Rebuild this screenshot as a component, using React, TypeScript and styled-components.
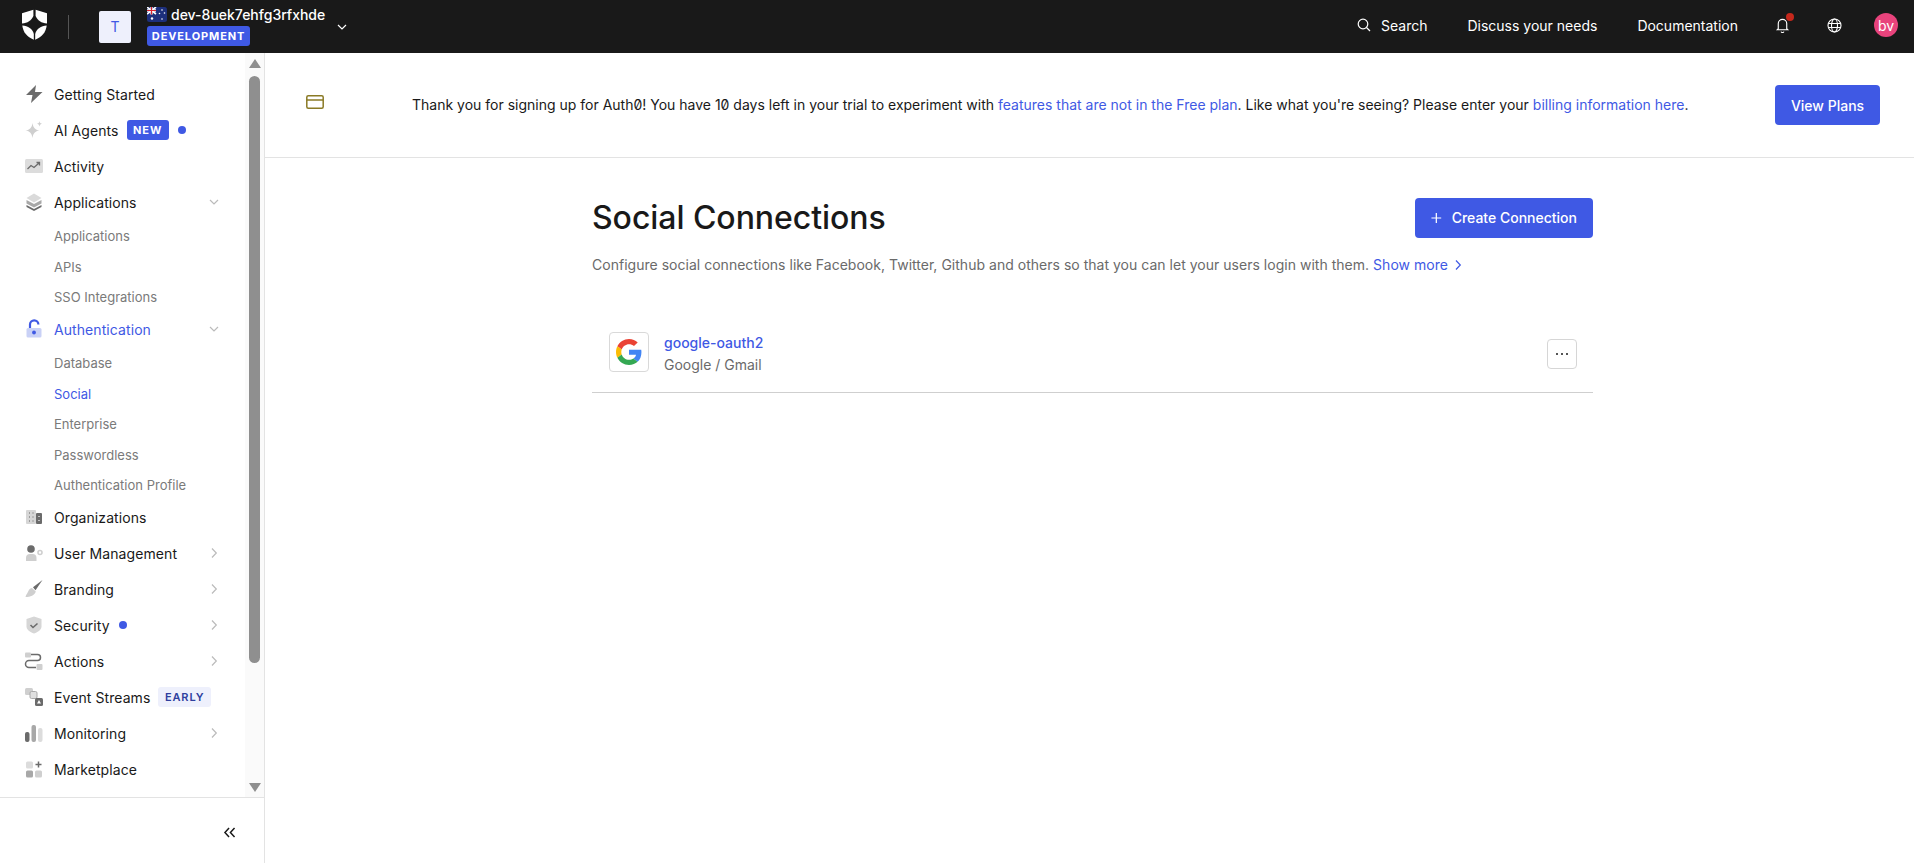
import React from "react";
import styled, { createGlobalStyle } from "styled-components";

const Global = createGlobalStyle`
  html, body { margin: 0; padding: 0; height: 100%; background: #fff; }
  body { font-family: Inter, "Noto Sans", sans-serif; color: #191919; overflow: hidden; }
  * { box-sizing: border-box; }
  a { text-decoration: none; }
`;

const Page = styled.div`display: flex; flex-direction: column; height: 863px; width: 1914px;`;
const Topbar = styled.header`height: 53px; flex: none; background: #191919; display: flex; align-items: center; padding: 0 16px 0 22px; color: #fff;`;
const LogoWrap = styled.div`width: 26px; height: 32px; flex: none; margin-top: -3px;`;
const Divider = styled.div`width: 1px; height: 24px; background: #555; margin: 0 30px 0 20px;`;
const TenantBox = styled.div`width: 32px; height: 32px; border-radius: 2px; background: #eef0fc; color: #3f59e4; display: flex; align-items: center; justify-content: center; font-size: 14px; margin-right: 16px;`;
const Tenant = styled.div`display: flex; flex-direction: column; gap: 3px; width: 189px; margin-top: -1px;`;
const TenantName = styled.div`display: flex; align-items: center; gap: 4px; font-size: 14px; font-weight: 500; line-height: 17px; white-space: nowrap;`;
const Badge = styled.span<{ $early?: boolean }>`
  display: inline-flex; align-items: center; justify-content: center; height: 20px; border-radius: 3px;
  padding: 0 6.5px; font-size: 11px; font-weight: 700; letter-spacing: 0.88px; line-height: 1;
  background: ${(p) => (p.$early ? "#eef0fc" : "#3f59e4")};
  color: ${(p) => (p.$early ? "#2f3f9e" : "#fff")};
  ${(p) => p.$early && "font-weight: 600;"}
`;
const EnvBadge = styled(Badge)`width: 103px;`;
const TopNav = styled.nav`margin-left: auto; margin-bottom: 3px; display: flex; align-items: center; font-size: 14px; font-weight: 400;`;
const TopLink = styled.a<{ $gap: number }>`color: #fff; margin-right: ${(p) => p.$gap}px; display: flex; align-items: center; gap: 10px; white-space: nowrap;`;
const IconBtn = styled.span<{ $gap: number }>`position: relative; display: flex; margin-right: ${(p) => p.$gap}px;`;
const RedDot = styled.span`position: absolute; top: -4px; right: -4px; width: 8px; height: 8px; background: #c5281c; border-radius: 50%;`;
const Avatar = styled.span`width: 24px; height: 24px; border-radius: 50%; background: #e8437c; color: #fff; display: flex; align-items: center; justify-content: center; font-size: 14px;`;

const Body = styled.div`flex: 1; display: flex; min-height: 0;`;
const Sidebar = styled.aside`width: 265px; flex: none; border-right: 1px solid #e3e3e3; display: flex; flex-direction: column;`;
const NavArea = styled.div`flex: 1; display: flex; min-height: 0; border-bottom: 1px solid #e3e3e3;`;
const NavList = styled.nav`flex: 1; padding: 24px 26px 0 24px; min-width: 0;`;
const Item = styled.div<{ $active?: boolean }>`
  height: 36px; padding-bottom: 2px; display: flex; align-items: center; font-size: 14px; font-weight: 400; letter-spacing: 0.08px;
  color: ${(p) => (p.$active ? "#3f59e4" : "#191919")};
`;
const IconSlot = styled.span`width: 30px; flex: none; display: flex; align-items: center;`;
const Sub = styled.div<{ $active?: boolean }>`
  height: 30.4px; display: flex; align-items: center; padding-left: 30px; font-size: 13px;
  color: ${(p) => (p.$active ? "#3f59e4" : "#7a7a7a")};
`;
const Dot = styled.span`width: 8px; height: 8px; background: #3f59e4; border-radius: 50%; margin-left: 9px;`;
const ItemBadge = styled(Badge)`margin-left: 8px;`;
const Chevron = styled.span`margin-left: auto; display: flex; margin-right: -1px;`;

const Scroll = styled.div`width: 19px; flex: none; background: #fafafa; display: flex; flex-direction: column; align-items: center; padding: 6px 0 5px 0;`;
const ArrowUp = styled.span`width: 0; height: 0; border-left: 6.5px solid transparent; border-right: 6.5px solid transparent; border-bottom: 9px solid #8f8f8f;`;
const ArrowDown = styled.span`width: 0; height: 0; border-left: 6.5px solid transparent; border-right: 6.5px solid transparent; border-top: 9px solid #8f8f8f; margin-top: auto;`;
const Thumb = styled.span`width: 11px; height: 587px; background: #8f8f8f; border-radius: 6px; margin-top: 8px;`;
const SideFoot = styled.div`height: 65px; flex: none; display: flex; align-items: center; justify-content: flex-end; padding: 3px 28px 0 0;`;

const Main = styled.main`flex: 1; min-width: 0; display: flex; flex-direction: column;`;
const Banner = styled.section`height: 105px; flex: none; border-bottom: 1px solid #e3e3e3; display: flex; align-items: center; padding: 0 34px 0 41px;`;
const CardIcon = styled.span`display: flex; margin-top: -6px;`;
const Message = styled.p`margin: 0 0 0 88px; font-size: 14px; line-height: 20px; font-feature-settings: "zero"; white-space: nowrap;`;
const LinkText = styled.a`color: #3f59e4;`;
const Primary = styled.button`
  height: 40px; border: 0; border-radius: 4px; background: #3f59e4; color: #fff; font: 500 14px Inter, sans-serif;
  display: flex; align-items: center; justify-content: center; gap: 10px; padding: 0 16px; white-space: nowrap;
`;
const PlansBtn = styled(Primary)`margin-left: auto; width: 105px;`;
const Content = styled.section`padding: 39px 321px 0 327px;`;
const HeadRow = styled.div`display: flex; align-items: center; justify-content: space-between; height: 41px;`;
const Title = styled.h1`margin: 0; font-size: 32px; font-weight: 500; line-height: 40px; letter-spacing: -0.05px;`;
const CreateBtn = styled(Primary)`width: 178px;`;
const Desc = styled.p`margin: 17px 0 0; font-size: 14px; line-height: 20px; letter-spacing: 0.02px; color: #6a6a6a; display: flex; align-items: center; gap: 4px;`;
const ShowMore = styled.a`color: #3f59e4; display: inline-flex; align-items: center; gap: 4px;`;
const ConnRow = styled.div`margin-top: 37px; height: 81px; border-bottom: 1px solid #cfcfcf; display: flex; align-items: center; padding: 0 16px 0 17px;`;
const LogoBox = styled.div`width: 40px; height: 40px; border: 1px solid #d9d9d9; border-radius: 4px; display: flex; align-items: center; justify-content: center; margin-right: 15px;`;
const ConnText = styled.div`display: flex; flex-direction: column; gap: 4px; margin-top: 4px;`;
const ConnName = styled.a`color: #3f59e4; font-size: 14px; font-weight: 500; line-height: 18px;`;
const ConnType = styled.span`color: #6a6a6a; font-size: 14px; line-height: 18px;`;
const MoreBtn = styled.button`margin-left: auto; margin-top: 4px; width: 30px; height: 30px; border: 1px solid #d6d6d6; border-radius: 4px; background: #fff; display: flex; align-items: center; justify-content: center; padding: 0;`;

const D = "#6b6b6b";
const L = "#cfcfcf";
const I = ({ children, w = 20, h = 20 }: { children: React.ReactNode; w?: number; h?: number }) => (
  <svg width={w} height={h} viewBox="0 0 20 20" fill="none">{children}</svg>
);
const Bolt = () => <I><path d="M12 1 2 11h6.5l-1.5 8L18.5 8H11z" fill={D} /></I>;
const Spark = () => <I><path d="M8.500 3c.8 5 2.500 6.700 7 7.500-4.500.8-6.200 2.500-7 7.500-.8-5-2.500-6.700-7-7.500 4.500-.8 6.200-2.500 7-7.500z" fill={L} /><path d="M15.500 1c.3 1.800 1 2.500 2.800 2.800-1.800.3-2.500 1-2.800 2.800-.3-1.800-1-2.500-2.800-2.800 1.800-.3 2.500-1 2.800-2.800z" fill={L} /></I>;
const Activity = () => <I><rect x="1" y="3" width="18" height="14" rx="1.500" fill="#dcdcdc" /><path d="M3.500 13l3.500-3.500 3 2 5-4.500M12.500 6.500h3v3" stroke={D} strokeWidth="1.300" /></I>;
const Layers = () => <I><path d="M10 1.500 17.500 6 10 10.500 2.500 6z" fill="#dadada" /><path d="M2.500 8 10 12l7.500-4v3.500L10 15.500 2.500 11.500z" fill="#a8a8a8" /><path d="M2.500 13 10 17l7.500-4v2L10 19l-7.500-4z" fill={D} /></I>;
const Lock = () => <I><rect x="2.500" y="9" width="15" height="9.500" rx="1.500" fill="#c9d1f6" /><path d="M6 9V5.500a4.200 4.200 0 0 1 8.400 0" stroke="#3f59e4" strokeWidth="2.200" /><circle cx="10" cy="13.500" r="1.900" fill="#3f59e4" /></I>;
const Orgs = () => <I><rect x="2" y="3" width="10" height="14" rx="1" fill="#d6d6d6" /><rect x="12" y="6" width="6" height="11" rx="1" fill={D} /><path d="M5 6h1M8.500 6h1M5 10h1M8.500 10h1M5 14h1M8.500 14h1" stroke="#8a8a8a" strokeWidth="1.500" /><path d="M15 9v1M15 13v1" stroke="#ddd" strokeWidth="1.500" /></I>;
const Users = () => <I><circle cx="7" cy="6" r="3.800" fill={D} /><path d="M2 18v-3a4 4 0 0 1 4-4h2.500a4 4 0 0 1 4 4v3z" fill={L} /><circle cx="16" cy="9.500" r="2" stroke={L} strokeWidth="1.600" /></I>;
const Brush = () => <I><path d="M18.500 1 9 8.200 11.500 11.200z" fill={D} /><path d="M8 9c-3.500.5-3.500 4-5.500 6.500-.5.500-1 2.500-1 2.500 5 0 9-1.500 10.300-5.500z" fill={L} /></I>;
const Shield = () => <I><path d="M10 1.500 17.500 4v7.500c0 3.500-3.500 5.500-7.500 7-4-1.500-7.500-3.500-7.500-7V4z" fill="#d6d6d6" /><path d="M6.500 10l2.500 2.500 4.500-4" stroke={D} strokeWidth="1.600" /></I>;
const Actions = () => <I><rect x="1" y="1.500" width="6" height="5" rx="1" fill={L} /><rect x="12.500" y="13" width="6" height="6" rx="1" fill={L} /><path d="M7 3.500h6.500a3 3 0 0 1 0 6h-8.500a3 3 0 0 0 0 7h7" stroke={D} strokeWidth="1.500" /></I>;
const Streams = () => <I><rect x="1" y="1" width="8" height="7" rx="1.500" fill={L} /><rect x="6" y="4.500" width="7" height="7" rx="1.500" fill="#e0e0e0" stroke="#aaa" /><rect x="11" y="11" width="8" height="8" rx="1.500" fill={D} /><path d="M15 13l2 3.500h-4z" fill="#fff" /></I>;
const Bars = () => <I><rect x="1" y="9" width="4.500" height="10" rx="2" fill={D} /><rect x="7.500" y="2" width="4.500" height="17" rx="2" fill="#a8a8a8" /><rect x="14" y="5" width="4.500" height="14" rx="2" fill="#dcdcdc" /></I>;
const Market = () => <I><rect x="2" y="2.500" width="7" height="7" rx="1.500" fill="#dcdcdc" /><rect x="2" y="11.500" width="7" height="7" rx="1.500" fill="#a8a8a8" /><rect x="11" y="11.500" width="7" height="7" rx="1.500" fill={L} /><path d="M14.500 2.500v6M11.500 5.500h6" stroke={D} strokeWidth="1.500" /></I>;

const ChevDown = ({ c = "#bbb", s = 12 }: { c?: string; s?: number }) => <svg width={s} height={s} viewBox="0 0 12 12" fill="none"><path d="M2 4l4 4 4-4" stroke={c} strokeWidth="1.200" /></svg>;
const ChevRight = ({ c = "#bbb" }: { c?: string }) => <svg width="12" height="12" viewBox="0 0 12 12" fill="none"><path d="M4 1.500l4.300 4.500L4 10.500" stroke={c} strokeWidth="1.200" /></svg>;

const Logo = () => (
  <svg width="26" height="32" viewBox="22 9 26 32" fill="#fff">
    <path d="M22 13.300 33.400 9.700V16C31.500 20.500 27.500 23.200 22 23.500z" />
    <path d="M47 13.300 35.600 9.700V16C37.500 20.500 41.500 23.200 47 23.500z" />
    <path d="M22.300 25.500C28 26 32.500 28.500 33.800 34V39.700C27 37 23 32 22.300 25.500z" />
    <path d="M46.700 25.500C41 26 36.500 28.500 35.200 34V39.700C42 37 46 32 46.700 25.500z" />
  </svg>
);
const Flag = () => (
  <svg width="20" height="15" viewBox="0 0 20 15">
    <rect width="20" height="15" rx="2.500" fill="#1d2f7c" />
    <path d="M0 0l9 7M9 0 0 7" stroke="#fff" strokeWidth="1.600" />
    <path d="M4.500 0v7.500M0 3.500h9" stroke="#fff" strokeWidth="2.400" />
    <path d="M4.500 0v7.500M0 3.500h9" stroke="#d8232f" strokeWidth="1.200" />
    <circle cx="5" cy="11.500" r="1.200" fill="#fff" /><circle cx="15" cy="3" r=".8" fill="#fff" /><circle cx="17.500" cy="6" r=".8" fill="#fff" /><circle cx="12.500" cy="6.500" r=".8" fill="#fff" /><circle cx="15" cy="12" r=".8" fill="#fff" />
  </svg>
);
const Search = () => <svg width="14" height="14" viewBox="0 0 14 14" fill="none"><circle cx="6" cy="6" r="4.800" stroke="#fff" strokeWidth="1.200" /><path d="M9.500 9.500l3.500 3.500" stroke="#fff" strokeWidth="1.200" /></svg>;
const Bell = () => <svg width="15" height="16" viewBox="0 0 14 17" fill="none"><path d="M2.500 12.500V7a4.500 4.500 0 0 1 9 0v5.500l1 1H1.500z" stroke="#fff" strokeWidth="1.200" /><path d="M5.500 15.500a1.600 1.600 0 0 0 3 0" stroke="#fff" strokeWidth="1.200" /></svg>;
const Globe = () => <svg width="15" height="15" viewBox="0 0 15 15" fill="none" stroke="#fff" strokeWidth="1.100"><circle cx="7.500" cy="7.500" r="6.500" /><ellipse cx="7.500" cy="7.500" rx="3" ry="6.500" /><path d="M1.500 5.500h12M1.500 9.500h12" /></svg>;
const Card = () => <svg width="18" height="14" viewBox="0 0 18 14" fill="none" stroke="#8a7a25" strokeWidth="1.500"><rect x=".8" y=".8" width="16.400" height="12.400" rx="1.500" /><path d="M.8 5h16.400" /></svg>;
const Plus = () => <svg width="12" height="12" viewBox="0 0 12 12" fill="none"><path d="M6 .5v11M.5 6h11" stroke="#fff" strokeWidth="1.400" /></svg>;
const Collapse = () => <svg width="13" height="11" viewBox="0 0 13 12" fill="none" stroke="#191919" strokeWidth="1.600"><path d="M6 1 1.500 6 6 11M12 1 7.500 6 12 11" /></svg>;
const Dots = () => <svg width="14" height="4" viewBox="0 0 14 4" fill="#555"><rect x="1" y="1" width="2" height="2" /><rect x="6" y="1" width="2" height="2" /><rect x="11" y="1" width="2" height="2" /></svg>;
const GoogleG = () => (
  <svg width="26" height="26" viewBox="0 0 48 48">
    <path fill="#EA4335" d="M24 9.500c3.540 0 6.710 1.220 9.210 3.600l6.850-6.850C35.900 2.380 30.470 0 24 0 14.620 0 6.510 5.380 2.560 13.220l7.980 6.190C12.430 13.720 17.740 9.500 24 9.500z" />
    <path fill="#4285F4" d="M46.980 24.550c0-1.570-.15-3.090-.38-4.550H24v9.020h12.940c-.58 2.960-2.260 5.480-4.780 7.180l7.730 6c4.510-4.180 7.090-10.360 7.090-17.650z" />
    <path fill="#FBBC05" d="M10.530 28.590c-.48-1.450-.76-2.990-.76-4.590s.27-3.140.76-4.590l-7.980-6.190C.92 16.460 0 20.120 0 24c0 3.880.92 7.540 2.560 10.780l7.970-6.190z" />
    <path fill="#34A853" d="M24 48c6.480 0 11.930-2.130 15.890-5.810l-7.730-6c-2.150 1.450-4.920 2.300-8.160 2.300-6.260 0-11.570-4.220-13.470-9.910l-7.980 6.190C6.510 42.620 14.620 48 24 48z" />
  </svg>
);

export default function App() {
  return (
    <Page>
      <Global />
      <Topbar>
        <LogoWrap><Logo /></LogoWrap>
        <Divider />
        <TenantBox>T</TenantBox>
        <Tenant>
          <TenantName><Flag />dev-8uek7ehfg3rfxhde</TenantName>
          <EnvBadge>DEVELOPMENT</EnvBadge>
        </Tenant>
        <ChevDown c="#fff" s={12} />
        <TopNav>
          <TopLink $gap={40}><Search />Search</TopLink>
          <TopLink $gap={40}>Discuss your needs</TopLink>
          <TopLink $gap={37}>Documentation</TopLink>
          <IconBtn $gap={37}><Bell /><RedDot /></IconBtn>
          <IconBtn $gap={32}><Globe /></IconBtn>
          <Avatar>bv</Avatar>
        </TopNav>
      </Topbar>
      <Body>
        <Sidebar>
          <NavArea>
            <NavList>
              <Item><IconSlot><Bolt /></IconSlot>Getting Started</Item>
              <Item><IconSlot><Spark /></IconSlot>AI Agents<ItemBadge>NEW</ItemBadge><Dot /></Item>
              <Item><IconSlot><Activity /></IconSlot>Activity</Item>
              <Item><IconSlot><Layers /></IconSlot>Applications<Chevron><ChevDown /></Chevron></Item>
              <Sub>Applications</Sub>
              <Sub>APIs</Sub>
              <Sub>SSO Integrations</Sub>
              <Item $active><IconSlot><Lock /></IconSlot>Authentication<Chevron><ChevDown /></Chevron></Item>
              <Sub>Database</Sub>
              <Sub $active>Social</Sub>
              <Sub>Enterprise</Sub>
              <Sub>Passwordless</Sub>
              <Sub>Authentication Profile</Sub>
              <Item><IconSlot><Orgs /></IconSlot>Organizations</Item>
              <Item><IconSlot><Users /></IconSlot>User Management<Chevron><ChevRight /></Chevron></Item>
              <Item><IconSlot><Brush /></IconSlot>Branding<Chevron><ChevRight /></Chevron></Item>
              <Item><IconSlot><Shield /></IconSlot>Security<Dot /><Chevron><ChevRight /></Chevron></Item>
              <Item><IconSlot><Actions /></IconSlot>Actions<Chevron><ChevRight /></Chevron></Item>
              <Item><IconSlot><Streams /></IconSlot>Event Streams<ItemBadge $early>EARLY</ItemBadge></Item>
              <Item><IconSlot><Bars /></IconSlot>Monitoring<Chevron><ChevRight /></Chevron></Item>
              <Item><IconSlot><Market /></IconSlot>Marketplace</Item>
            </NavList>
            <Scroll><ArrowUp /><Thumb /><ArrowDown /></Scroll>
          </NavArea>
          <SideFoot><Collapse /></SideFoot>
        </Sidebar>
        <Main>
          <Banner>
            <CardIcon><Card /></CardIcon>
            <Message>
              Thank you for signing up for Auth0! You have 10 days left in your trial to experiment with{" "}
              <LinkText>features that are not in the Free plan</LinkText>. Like what you're seeing? Please enter your{" "}
              <LinkText>billing information here</LinkText>.
            </Message>
            <PlansBtn>View Plans</PlansBtn>
          </Banner>
          <Content>
            <HeadRow>
              <Title>Social Connections</Title>
              <CreateBtn><Plus />Create Connection</CreateBtn>
            </HeadRow>
            <Desc>
              Configure social connections like Facebook, Twitter, Github and others so that you can let your users login with them.
              <ShowMore>Show more <ChevRight c="#3f59e4" /></ShowMore>
            </Desc>
            <ConnRow>
              <LogoBox><GoogleG /></LogoBox>
              <ConnText>
                <ConnName>google-oauth2</ConnName>
                <ConnType>Google / Gmail</ConnType>
              </ConnText>
              <MoreBtn aria-label="More"><Dots /></MoreBtn>
            </ConnRow>
          </Content>
        </Main>
      </Body>
    </Page>
  );
}
